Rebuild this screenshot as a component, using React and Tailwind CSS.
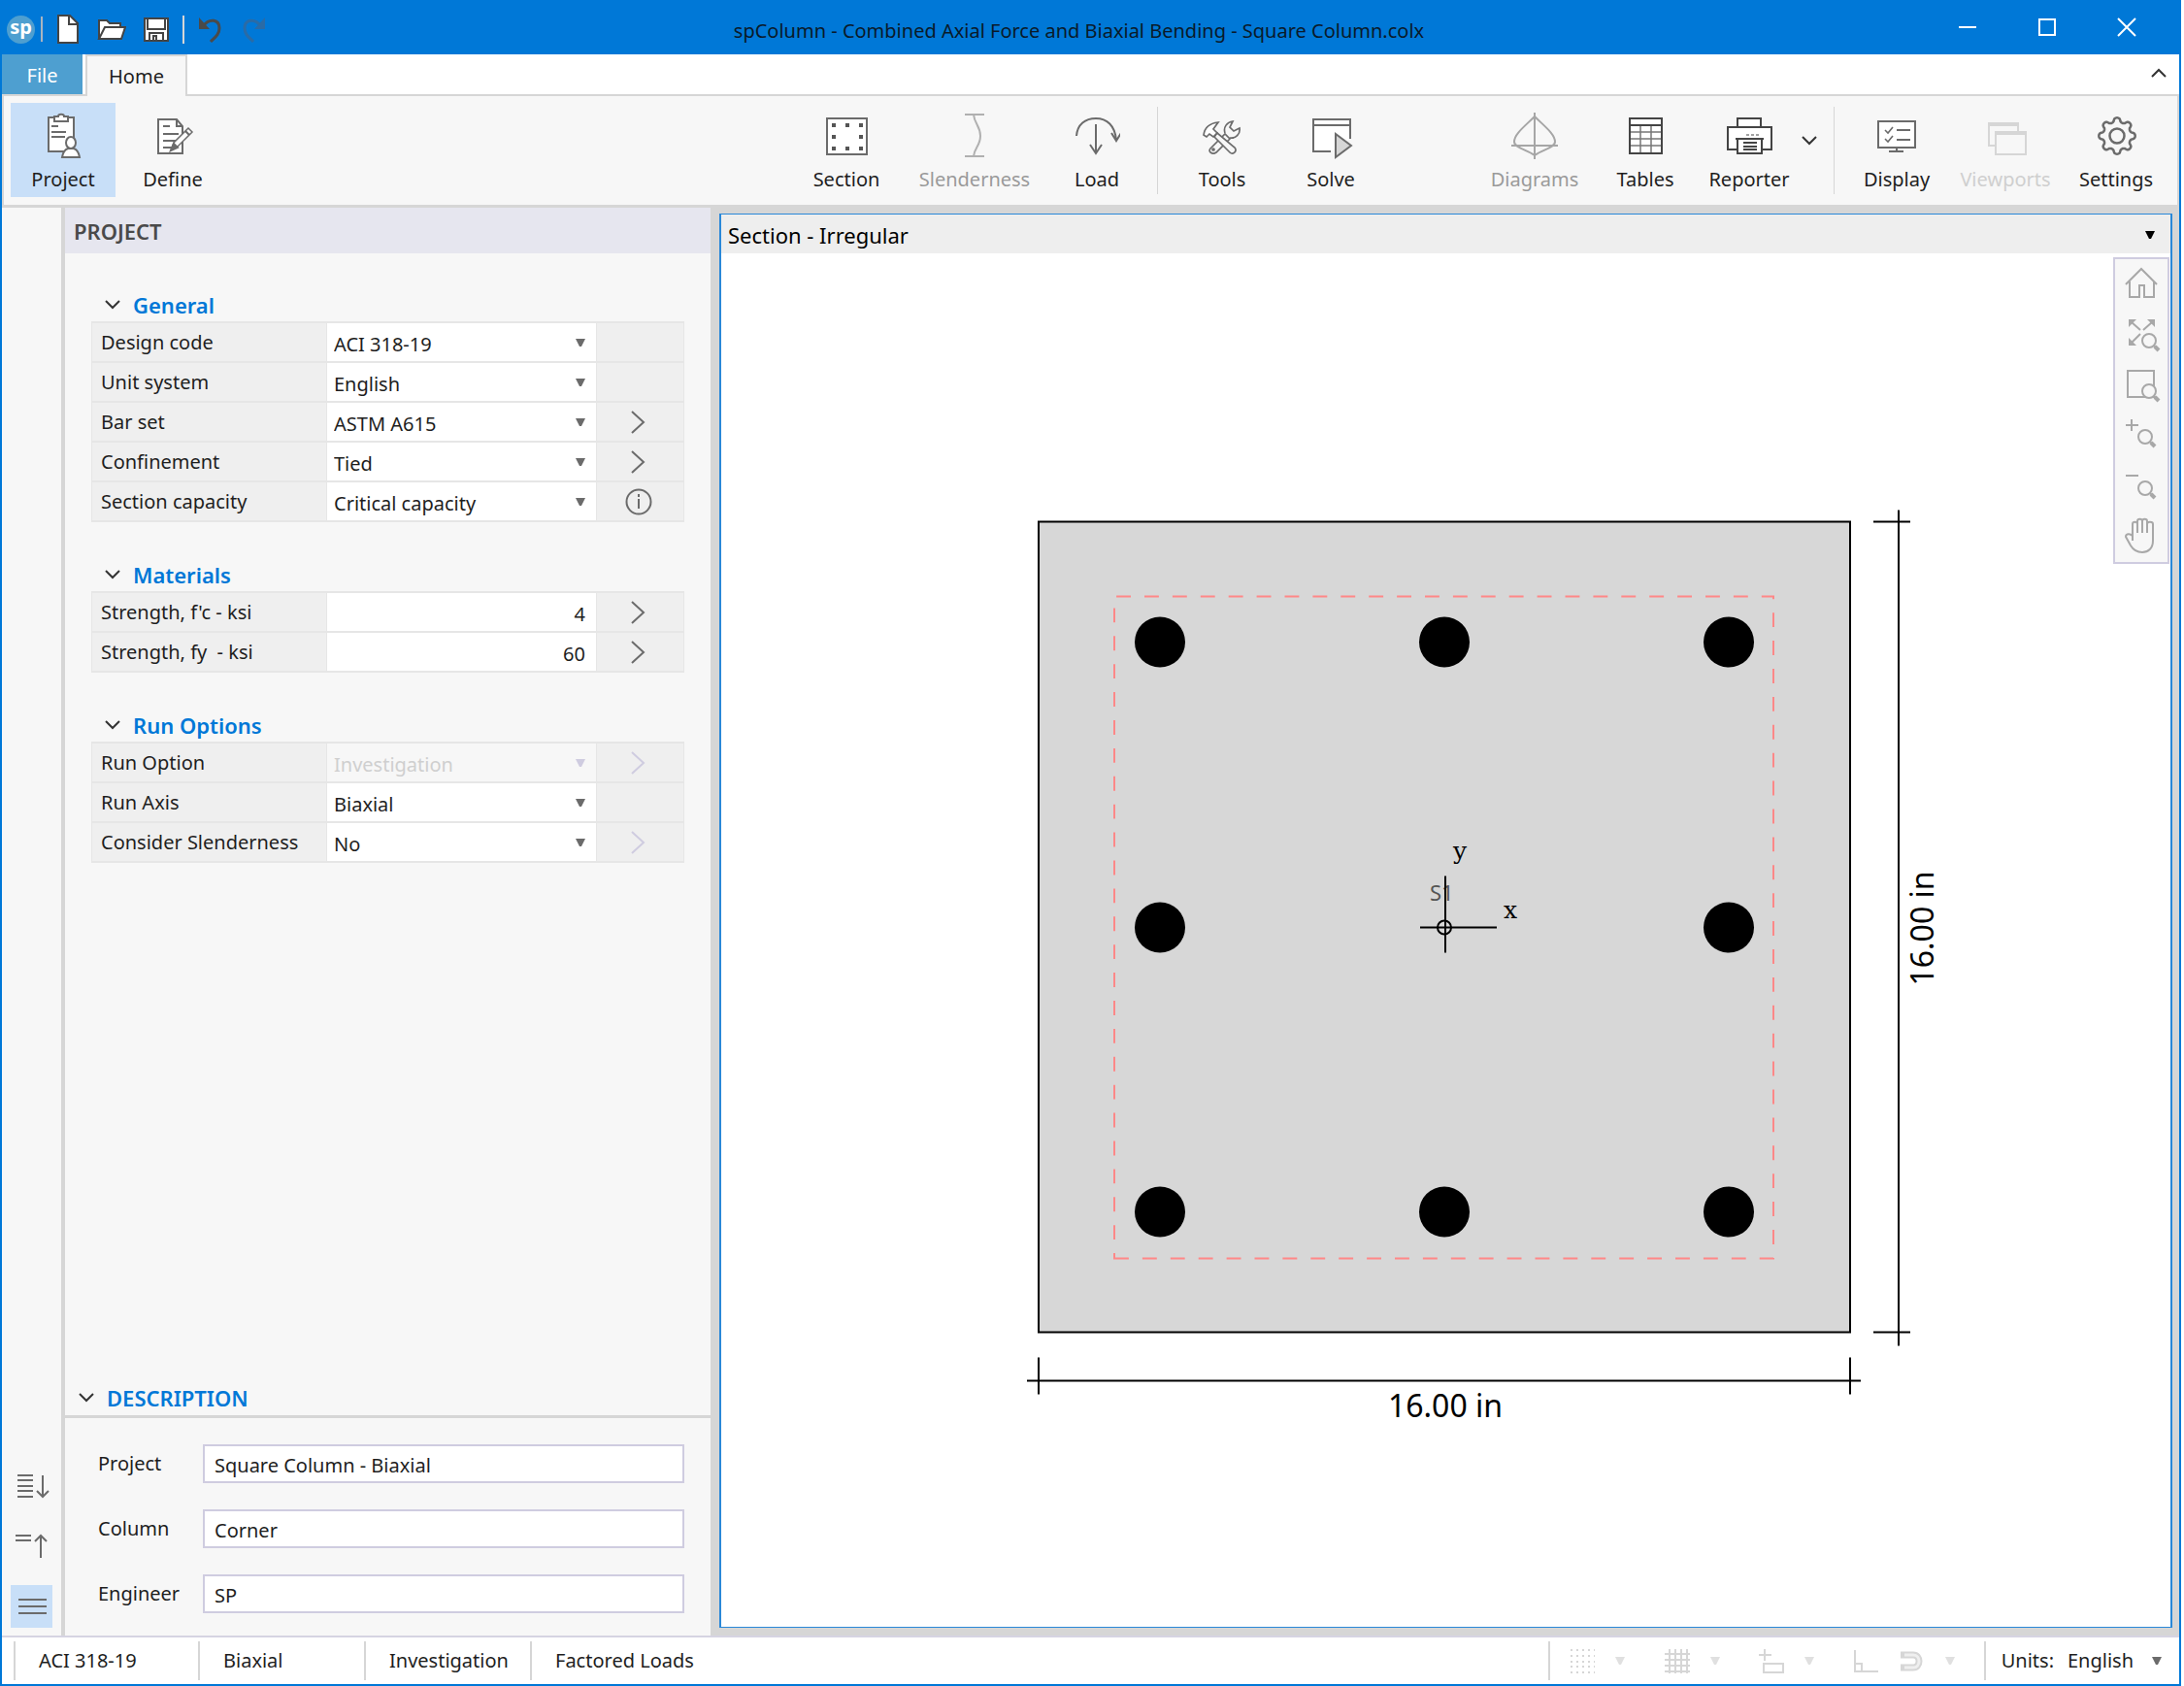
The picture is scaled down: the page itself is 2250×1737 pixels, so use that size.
import React from "react";

const INK = "#6b6b6b";

function Icon({ children, color = INK, size = 48, width = 2 }) {
  return (
    <svg
      aria-hidden="true"
      width={size}
      height={size}
      viewBox={`0 0 ${size} ${size}`}
      fill="none"
      stroke={color}
      strokeWidth={width}
      className="block shrink-0"
    >
      {children}
    </svg>
  );
}

function Triangle({ color = "#6b6b6b" }) {
  return (
    <svg aria-hidden="true" width="12" height="8" viewBox="0 0 12 8" className="pointer-events-none block shrink-0">
      <path d="M1 0h10L7 8H5z" fill={color} />
    </svg>
  );
}

function Caret({ up = false }) {
  return (
    <svg aria-hidden="true" width="18" height="12" viewBox="0 0 18 12" fill="none" stroke="#333" strokeWidth="2" className="block shrink-0">
      <path d={up ? "M2 10l7-7 7 7" : "M2 2l7 7 7-7"} />
    </svg>
  );
}

function gearPath(cx, cy) {
  const points = [];
  for (let i = 0; i < 160; i += 1) {
    const t = (i / 160) * Math.PI * 2;
    const wave = Math.cos(8 * t);
    const r = 16.5 + 2.2 * Math.sign(wave) * Math.sqrt(Math.abs(wave));
    points.push(`${(cx + r * Math.sin(t)).toFixed(2)} ${(cy - r * Math.cos(t)).toFixed(2)}`);
  }
  return `M${points.join("L")}Z`;
}

const icons = {
  project: (
    <Icon>
      <path d="M9 5h26v22l-9 13H9z" fill="#fff" stroke="none" />
      <path d="M14 5H9v35h17M29 5h6v21" />
      <path d="M15 9V4h4c0-3 6-3 6 0h4v5z" fill="#fff" />
      <path d="M12 14h7M12 20h15M12 25h14" />
      <path d="M23 46c1-6 3-8 6-9h6c3 1 5 3 6 9z" fill="#fff" />
      <ellipse cx="32" cy="31" rx="5" ry="6" fill="#fff" />
    </Icon>
  ),
  define: (
    <Icon>
      <path d="M9 7h19l6 7v28H9z" fill="#fff" />
      <path d="M28 7v7h6M14 14h7M14 22h16M14 29h13M14 36h9" />
      <path d="M22 39l3-8 15-15 4 4-15 15z" fill="#fff" strokeWidth="1.5" />
      <path d="M22 39l3-7 4 4zM37 19l4 4" fill={INK} />
    </Icon>
  ),
  section: (
    <Icon>
      <rect x="4" y="6" width="41" height="37" fill="#fff" />
      {[13, 25, 37].map((y) =>
        [11, 25, 39].map((x) =>
          x === 25 && y === 25 ? null : <rect key={`${x}-${y}`} x={x - 2} y={y - 2} width="4" height="4" fill="#555" stroke="none" />
        )
      )}
    </Icon>
  ),
  slenderness: (
    <Icon color="#b0b0b0">
      <path d="M14 2h20M14 45h20M23 2c1 10 7 12 7 22s-6 12-7 21" />
    </Icon>
  ),
  load: (
    <Icon>
      <path d="M3 24C4 12 12 6 23 6s20 7 21 23M39 21l5 8 5-8M23 12v29M17 33l6 9 6-9" />
    </Icon>
  ),
  tools: (
    <Icon width={1.7}>
      <path d="M12 37l15-15 5 5-14 14c-4 3-9-1-6-4z" />
      <path d="M27 21c-2-6 2-11 8-12l-3 6 4 4 6-3c1 6-4 11-10 10" />
      <path d="M5 23c1-7 6-12 15-13l-5 7 4 4-4 4-4-3-3 3z" fill="#fff" />
      <path d="M16 25l3-4 18 15c3 4-2 8-5 5z" fill="#f7f7f7" />
      <circle cx="15" cy="38" r="1" />
    </Icon>
  ),
  solve: (
    <Icon>
      <path d="M24 40H6V7h38v20" fill="#fff" stroke="none" />
      <path d="M24 40H6V7h38v20M6 13h38" />
      <path d="M29 22v24l16-12z" fill="#d6d6d6" />
    </Icon>
  ),
  diagrams: (
    <Icon color="#a6a6a6">
      <path d="M24 4C14 14 3 22 3 30c0 6 12 8 21 14 9-6 21-8 21-14 0-8-11-16-21-26z" />
      <path d="M24 0v48M0 34h48" />
    </Icon>
  ),
  tables: (
    <Icon color="#444">
      <rect x="8" y="6" width="33" height="36" fill="#fff" />
      <path d="M8 13h33" />
      <path d="M9 20h31M9 27h31M9 34h31M19 14v27M30 14v27" stroke="#777" strokeWidth="1.5" />
    </Icon>
  ),
  reporter: (
    <Icon color="#444">
      <path d="M12 14V6h24v8" fill="#fff" />
      <path d="M12 38H2V15h45v23H37" fill="#fff" />
      <rect x="12" y="27" width="25" height="15" fill="#fff" />
      <path d="M10 27h29M18 31h14M18 35h14M18 38h14" />
      <path d="M21 23h15" strokeDasharray="3 2" strokeWidth="1" />
    </Icon>
  ),
  display: (
    <Icon>
      <rect x="5" y="9" width="38" height="27" fill="#fff" />
      <path d="M24 36v4M16 40h15M24 18h14M24 28h14" />
      <path d="M12 18l3 3 5-6M12 27l3 3 5-6" strokeWidth="1.6" />
    </Icon>
  ),
  viewports: (
    <Icon color="#d6d6d6">
      <rect x="7" y="11" width="30" height="23" />
      <path d="M7 12h30" strokeWidth="4" />
      <rect x="14" y="20" width="31" height="23" fill="#f7f7f7" />
      <path d="M13 21h33" strokeWidth="4" />
    </Icon>
  ),
  settings: (
    <Icon width={2.5}>
      <path d={gearPath(25, 24)} />
      <circle cx="25" cy="24" r="7.5" />
    </Icon>
  ),
};

const ribbonTone = {
  normal: "text-[#1e1e1e]",
  muted: "text-[#9a9a9a]",
  faint: "text-[#cfcfcf]",
};

function RibbonButton({ icon, label, width, tone = "normal", active = false }) {
  return (
    <button
      type="button"
      disabled={tone !== "normal"}
      className={`flex h-[97px] flex-col items-center pt-[10px] ${width} ${ribbonTone[tone]} ${active ? "bg-[#c8dff8]" : ""}`}
    >
      {icons[icon]}
      <span className="mt-[9px] leading-6">{label}</span>
    </button>
  );
}

function RibbonDivider({ margin }) {
  return <div className={`h-[90px] w-px bg-[#d6d6d6] ${margin}`} />;
}

function TitleBar() {
  return (
    <header className="grid h-14 shrink-0 grid-cols-[1fr_auto_1fr] items-center bg-[#0078d7]">
      <div className="flex h-full items-center pb-0.5 pl-[7px] pt-1.5">
        <span className="flex size-[29px] items-center justify-center rounded-full bg-[#4e9fd0] text-xl leading-none font-bold text-white">
          <span className="-mt-1">sp</span>
        </span>
        <span className="ml-1.5 h-[26px] w-0.5 bg-[#a9b4bf]" />
        <button type="button" aria-label="New" className="ml-3">
          <Icon size={30} color="#444" width={2}>
            <path d="M4 1h12l8 8v20H4z" fill="#fff" />
            <path d="M15 1v9h9" />
          </Icon>
        </button>
        <button type="button" aria-label="Open" className="ml-3.5">
          <Icon size={30} color="#444" width={2}>
            <path d="M2 25V6h8l3 3h11v4" fill="#fff" />
            <path d="M2 25l6-12h21l-4 12z" fill="#fff" />
          </Icon>
        </button>
        <button type="button" aria-label="Save" className="ml-4">
          <Icon size={30} color="#444" width={2}>
            <path d="M3 4h24v23H3z" fill="#fff" />
            <path d="M6 4v11h18V4M8 27v-8h14v8M12 27v-5h3v5" />
          </Icon>
        </button>
        <span className="ml-3 h-[29px] w-0.5 bg-[#d6d6d6]" />
        <button type="button" aria-label="Undo" className="ml-3">
          <Icon size={30} color="#4a4a4a" width={3}>
            <path d="M7 12c7-9 17-7 17 2 0 6-4 9-9 14" />
            <path d="M3 3v12h11z" fill="#4a4a4a" stroke="none" />
          </Icon>
        </button>
        <button type="button" aria-label="Redo" disabled className="ml-3.5">
          <Icon size={30} color="#2a6ba6" width={3}>
            <path d="M23 12C16 3 6 5 6 14c0 6 4 9 9 14" />
            <path d="M27 3v12H16z" fill="#2a6ba6" stroke="none" />
          </Icon>
        </button>
      </div>
      <h1 className="pt-2 pr-6 text-[20px] leading-7 text-[#0a1a2a]">
        spColumn - Combined Axial Force and Biaxial Bending - Square Column.colx
      </h1>
      <div className="flex items-center justify-end pr-[27px]">
        <button type="button" aria-label="Minimize" className="flex w-[82px] justify-center">
          <Icon size={20} color="#fff">
            <path d="M1 10h18" />
          </Icon>
        </button>
        <button type="button" aria-label="Maximize" className="flex w-[82px] justify-center">
          <Icon size={20} color="#fff">
            <path d="M2 2h16v16H2z" />
          </Icon>
        </button>
        <button type="button" aria-label="Close" className="ml-3 flex w-[58px] justify-center">
          <Icon size={20} color="#fff">
            <path d="M1 1l18 18M19 1L1 19" />
          </Icon>
        </button>
      </div>
    </header>
  );
}

function TabRow() {
  return (
    <nav className="flex h-[43px] shrink-0 items-stretch border-b-2 border-[#d6d6d6] bg-white">
      <button type="button" className="w-[83px] bg-[#4e9fd0] pt-0.5 text-white">File</button>
      <button type="button" className="-mb-0.5 ml-[3px] w-[105px] border-2 border-b-0 border-[#d6d6d6] bg-[#f7f7f7]">
        Home
      </button>
      <button type="button" aria-label="Collapse ribbon" className="ml-auto pr-3 pb-1">
        <Caret up />
      </button>
    </nav>
  );
}

function Ribbon() {
  return (
    <div className="flex shrink-0 items-center border-x-2 border-b-[3px] border-[#d6d6d6] bg-[#f7f7f7] pt-[7px] pb-2">
      <div className="flex gap-[5px] pl-[7px]">
        <RibbonButton icon="project" label="Project" width="w-[108px]" active />
        <RibbonButton icon="define" label="Define" width="w-[108px]" />
      </div>
      <div className="ml-auto flex items-center">
        <RibbonButton icon="section" label="Section" width="w-[116px]" />
        <RibbonButton icon="slenderness" label="Slenderness" width="w-[148px]" tone="muted" />
        <RibbonButton icon="load" label="Load" width="w-[104px]" />
        <RibbonDivider margin="mx-[10px]" />
        <RibbonButton icon="tools" label="Tools" width="w-[112px]" />
        <RibbonButton icon="solve" label="Solve" width="w-[112px]" />
      </div>
      <div className="ml-24 flex items-center pr-[11px]">
        <RibbonButton icon="diagrams" label="Diagrams" width="w-[116px]" tone="muted" />
        <RibbonButton icon="tables" label="Tables" width="w-[112px]" />
        <RibbonButton icon="reporter" label="Reporter" width="w-[102px]" />
        <button type="button" aria-label="Reporter options" className="flex w-[22px] justify-center pb-5">
          <Caret />
        </button>
        <RibbonDivider margin="mx-[14px]" />
        <RibbonButton icon="display" label="Display" width="w-[100px]" />
        <RibbonButton icon="viewports" label="Viewports" width="w-[124px]" tone="faint" />
        <RibbonButton icon="settings" label="Settings" width="w-[104px]" />
      </div>
    </div>
  );
}

function SideStrip() {
  return (
    <aside className="flex w-[61px] shrink-0 flex-col items-start justify-end gap-[18px] bg-[#f7f7f7] pb-2 pl-[9px]">
      <button type="button" aria-label="Expand all" className="flex h-11 w-[43px] items-center justify-center">
        <Icon size={36}>
          <path d="M3 7h16M3 12h16M3 18h16M3 23h16M3 29h16M29 7v22M23 23l6 6 6-6" />
        </Icon>
      </button>
      <button type="button" aria-label="Collapse all" className="flex h-11 w-[43px] items-center justify-center">
        <Icon size={36}>
          <path d="M1 7h16M1 12h16M27 30V7M21 13l6-6 6 6" />
        </Icon>
      </button>
      <button type="button" aria-label="Show panel" className="flex h-11 w-[43px] items-center justify-center bg-[#c8dff8]">
        <Icon size={36}>
          <path d="M4 11h29M4 18h29M4 25h29" />
        </Icon>
      </button>
    </aside>
  );
}

function SelectField({ id, value, disabled }) {
  return (
    <div className={`grid grid-cols-[1fr_12px] items-center pr-2.5 ${disabled ? "bg-[#f7f7f7]" : "bg-white"}`}>
      <select
        id={id}
        defaultValue={value}
        disabled={disabled}
        className={`col-span-2 col-start-1 row-start-1 h-[39px] w-full appearance-none bg-transparent pt-1 pl-[7px] outline-none ${
          disabled ? "text-[#cfcfcf] opacity-100" : ""
        }`}
      >
        <option>{value}</option>
      </select>
      <span className="pointer-events-none col-start-2 row-start-1">
        <Triangle color={disabled ? "#cfcce0" : "#6b6b6b"} />
      </span>
    </div>
  );
}

function MoreButton({ kind, label }) {
  if (kind === "none") return <div className="bg-[#efefef]" />;
  if (kind === "info") {
    return (
      <button type="button" aria-label={`About ${label}`} className="flex items-center justify-center bg-[#efefef] pr-1">
        <Icon size={28} width={2}>
          <circle cx="14" cy="14" r="12.5" />
          <path d="M14 11v10M14 6v3" />
        </Icon>
      </button>
    );
  }
  return (
    <button
      type="button"
      aria-label={`Edit ${label}`}
      disabled={kind === "faint"}
      className="flex items-center justify-center bg-[#efefef] pr-1"
    >
      <Icon size={24} color={kind === "faint" ? "#cfcce0" : INK}>
        <path d="M5 1l12 11L5 23" />
      </Icon>
    </button>
  );
}

function PropertyGroup({ title, rows }) {
  return (
    <section>
      <h3 className="mb-[3px] ml-[13px] flex items-center gap-3 text-[22px] leading-7 font-semibold text-[#0078d7]">
        <Caret />
        {title}
      </h3>
      <div className="grid gap-y-0.5 bg-[#e6e6e6] px-px py-0.5">
        {rows.map((row) => {
          const id = row.label.replace(/\W+/g, "-").toLowerCase();
          return (
            <div key={row.label} className="grid h-[39px] grid-cols-[241px_1fr_89px] gap-x-px">
              <label htmlFor={id} className="flex items-center bg-[#efefef] pl-[9px] whitespace-pre">
                {row.label}
              </label>
              {row.type === "number" ? (
                <input
                  id={id}
                  type="text"
                  defaultValue={row.value}
                  className="w-full min-w-0 bg-white pt-1 pr-[11px] text-right outline-none"
                />
              ) : (
                <SelectField id={id} value={row.value} disabled={row.disabled} />
              )}
              <MoreButton kind={row.more || "none"} label={row.label} />
            </div>
          );
        })}
      </div>
    </section>
  );
}

const groups = [
  {
    title: "General",
    rows: [
      { label: "Design code", value: "ACI 318-19" },
      { label: "Unit system", value: "English" },
      { label: "Bar set", value: "ASTM A615", more: "open" },
      { label: "Confinement", value: "Tied", more: "open" },
      { label: "Section capacity", value: "Critical capacity", more: "info" },
    ],
  },
  {
    title: "Materials",
    rows: [
      { label: "Strength, f'c - ksi", value: "4", type: "number", more: "open" },
      { label: "Strength, fy  - ksi", value: "60", type: "number", more: "open" },
    ],
  },
  {
    title: "Run Options",
    rows: [
      { label: "Run Option", value: "Investigation", disabled: true, more: "faint" },
      { label: "Run Axis", value: "Biaxial" },
      { label: "Consider Slenderness", value: "No", more: "faint" },
    ],
  },
];

const description = [
  ["Project", "Square Column - Biaxial"],
  ["Column", "Corner"],
  ["Engineer", "SP"],
];

function ProjectPanel() {
  return (
    <div className="flex w-[669px] shrink-0 flex-col border-l-4 border-[#d6d6d6] bg-[#f7f7f7]">
      <h2 className="h-[47px] shrink-0 bg-[#e6e6ef] pt-2.5 pl-[9px] text-[22px] leading-7 font-semibold text-[#4a4a4a]">PROJECT</h2>
      <div className="flex flex-col gap-10 pt-[39px] pr-[27px] pl-[27px]">
        {groups.map((group) => (
          <PropertyGroup key={group.title} {...group} />
        ))}
      </div>
      <section className="mt-auto">
        <h2 className="flex items-center gap-3 border-b-[3px] border-[#d6d6d6] pb-1 pl-[13px] text-[22px] leading-7 font-semibold text-[#0078d7]">
          <Caret />
          DESCRIPTION
        </h2>
        <div className="flex flex-col gap-[27px] pt-[27px] pr-[27px] pb-[23px] pl-[34px]">
          {description.map(([label, value]) => (
            <div key={label} className="flex items-center">
              <label htmlFor={`description-${label}`} className="w-[108px]">{label}</label>
              <input
                id={`description-${label}`}
                type="text"
                defaultValue={value}
                className="h-10 min-w-0 flex-1 border-2 border-[#cfcce0] bg-white pt-0.5 pl-2.5 outline-none"
              />
            </div>
          ))}
        </div>
      </section>
    </div>
  );
}

function Magnifier({ x, y }) {
  return (
    <>
      <circle cx={x} cy={y} r="7" fill="#f7f7f7" />
      <path d={`M${x + 5} ${y + 5}l2 2`} />
      <path d={`M${x + 6} ${y + 6}l4 4`} strokeWidth="4" />
    </>
  );
}

const viewTools = [
  [
    "Home view",
    <>
      <path d="M4 20L20 4l16 16" />
      <path d="M8 17v16h10V21h5v12h10V17" />
    </>,
  ],
  [
    "Zoom to fit",
    <>
      <path d="M10 7l9 8M31 7l-9 8M10 28l9-9" />
      <path d="M7 4h8l-8 8zM34 4h-8l8 8zM7 31h8l-8-8z" fill="#a8a8a8" stroke="none" />
      <Magnifier x={28} y={26} />
    </>,
  ],
  [
    "Zoom window",
    <>
      <rect x="6" y="5" width="27" height="27" />
      <Magnifier x={28} y={26} />
    </>,
  ],
  [
    "Zoom in",
    <>
      <path d="M4 9h13M10 3v12" />
      <Magnifier x={24} y={21} />
    </>,
  ],
  [
    "Zoom out",
    <>
      <path d="M4 9h13" />
      <Magnifier x={24} y={22} />
    </>,
  ],
  [
    "Pan",
    <path
      key="hand"
      d="M11 24V7c0-3 5-3 5 0v9V4c0-3 5-3 5 0v12V4c0-3 5-3 5 0v12V7c0-3 6-3 6 0v17c0 8-5 12-11 12S12 34 9 29l-5-9c0-3 4-4 7-1"
    />,
  ],
];

const barCentres = [
  [1195, 661], [1488, 661], [1781, 661],
  [1195, 955], [1781, 955],
  [1195, 1248], [1488, 1248], [1781, 1248],
];

function SectionDrawing() {
  return (
    <svg
      role="img"
      aria-label="Square column section, 16.00 in by 16.00 in with eight bars"
      viewBox="743 261 1493 1414"
      className="block h-full w-full"
      fill="none"
      stroke="#000"
      strokeWidth="2"
    >
      <rect x="1070" y="537" width="836" height="835" fill="#d7d7d7" />
      <path d="M1148 1296H1827V614H1148Z" stroke="#ff8888" strokeDasharray="14.9 14" />
      <g fill="#000" stroke="none">
        {barCentres.map(([x, y]) => (
          <circle key={`${x}-${y}`} cx={x} cy={y} r="26" />
        ))}
      </g>
      <text x="1473" y="927" fontSize="22" fill="#555" stroke="none">S1</text>
      <path d="M1463 955H1542M1489 902V981" />
      <circle cx="1488" cy="955" r="7" />
      <g fill="#000" stroke="none" fontSize="25" fontFamily="'DejaVu Serif', serif">
        <text x="1497" y="884">y</text>
        <text x="1549" y="945">x</text>
      </g>
      <path d="M1956 525V1386M1930 537H1968M1930 1372H1968" />
      <path d="M1058 1422H1917M1070 1398V1436M1906 1398V1436" />
      <g fill="#000" stroke="none" fontSize="32" textAnchor="middle">
        <text x="1489" y="1459">16.00 in</text>
        <text transform="translate(1992 956) rotate(-90)">16.00 in</text>
      </g>
    </svg>
  );
}

function Viewport() {
  return (
    <main className="flex min-w-0 flex-1 bg-[#d6d6d6] pt-1.5 pr-[7px] pb-2 pl-[9px]">
      <div className="flex min-w-0 flex-1 flex-col border-x-2 border-y border-[#2a88d8] bg-white">
        <div className="flex h-10 shrink-0 items-center justify-between bg-[#eee] pt-0.5 pr-[15px] pl-[7px]">
          <h2 className="text-[22px] text-black">Section - Irregular</h2>
          <button type="button" aria-label="Viewport menu">
            <Triangle color="#000" />
          </button>
        </div>
        <div className="relative min-h-0 flex-1">
          <SectionDrawing />
          <div className="absolute top-1 right-px flex w-[58px] flex-col items-center border-2 border-[#cfcce0] bg-[#f7f7f7]">
            {viewTools.map(([label, art]) => (
              <button key={label} type="button" aria-label={label} className="flex h-[52px] items-center">
                <Icon size={40} color="#a8a8a8">{art}</Icon>
              </button>
            ))}
          </div>
        </div>
      </div>
    </main>
  );
}

function StatusTool({ label, width, menu = true, children }) {
  return (
    <button type="button" aria-label={label} disabled className={`flex items-center gap-[19px] ${width}`}>
      <Icon size={28} color="#d6d6d6">{children}</Icon>
      {menu && <Triangle color="#e0e0e0" />}
    </button>
  );
}

function StatusBar() {
  return (
    <footer className="flex h-[50px] shrink-0 items-center border-t-2 border-[#d6d4e2] bg-white">
      <div className="ml-3 flex items-center">
        <span className="w-[190px] border-l-2 border-[#d6d6d6] pl-6 leading-10">ACI 318-19</span>
        <span className="w-[171px] border-l-2 border-[#d6d6d6] pl-6 leading-10">Biaxial</span>
        <span className="w-[171px] border-l-2 border-[#d6d6d6] pl-6 leading-10">Investigation</span>
        <span className="border-l-2 border-[#d6d6d6] pl-6 leading-10">Factored Loads</span>
      </div>
      <div className="ml-auto flex h-10 items-center border-l-2 border-[#d6d6d6] pl-[19px]">
        <StatusTool label="Grid dots" width="w-[98px]">
          <path d="M2 3h25M2 9h25M2 15h25M2 20h25M2 26h25" strokeDasharray="2 4" />
        </StatusTool>
        <StatusTool label="Grid lines" width="w-[97px]">
          <path d="M1 7h26M1 13h26M1 19h26M1 25h26M6 2v25M12 2v25M18 2v25M24 2v25" />
        </StatusTool>
        <StatusTool label="Snap" width="w-[97px]">
          <path d="M1 8h13M7 2v12M6 17h20v9H6z" />
        </StatusTool>
        <StatusTool label="Ortho" width="w-12" menu={false}>
          <path d="M3 3v22h24M3 17h7v8" />
        </StatusTool>
        <StatusTool label="Object snap" width="w-[88px]">
          <path d="M2 8h13c8 0 8 13 0 13H2" strokeWidth="7" />
          <path d="M6 8h9c8 0 8 13 0 13H6" strokeWidth="3" stroke="#efefef" />
        </StatusTool>
      </div>
      <div className="flex h-10 items-center border-l-2 border-[#d6d6d6] pr-[17px] pl-4">
        <label htmlFor="status-units">Units:</label>
        <div className="ml-3.5 grid w-[98px] grid-cols-[1fr_12px] items-center">
          <select
            id="status-units"
            defaultValue="English"
            className="col-span-2 col-start-1 row-start-1 h-10 appearance-none bg-transparent outline-none"
          >
            <option>English</option>
          </select>
          <span className="pointer-events-none col-start-2 row-start-1">
            <Triangle />
          </span>
        </div>
      </div>
    </footer>
  );
}

export default function App() {
  return (
    <div className="flex h-screen bg-white pr-[3px] font-['Noto_Sans','Open_Sans',sans-serif] text-[20px] leading-6 text-[#1e1e1e]">
      <div className="flex min-w-0 flex-1 flex-col bg-[#0078d7]">
        <TitleBar />
        <div className="flex min-h-0 flex-1 flex-col px-0.5 pb-0.5">
          <TabRow />
          <Ribbon />
          <div className="flex min-h-0 flex-1">
            <SideStrip />
            <ProjectPanel />
            <Viewport />
          </div>
          <StatusBar />
        </div>
      </div>
    </div>
  );
}
